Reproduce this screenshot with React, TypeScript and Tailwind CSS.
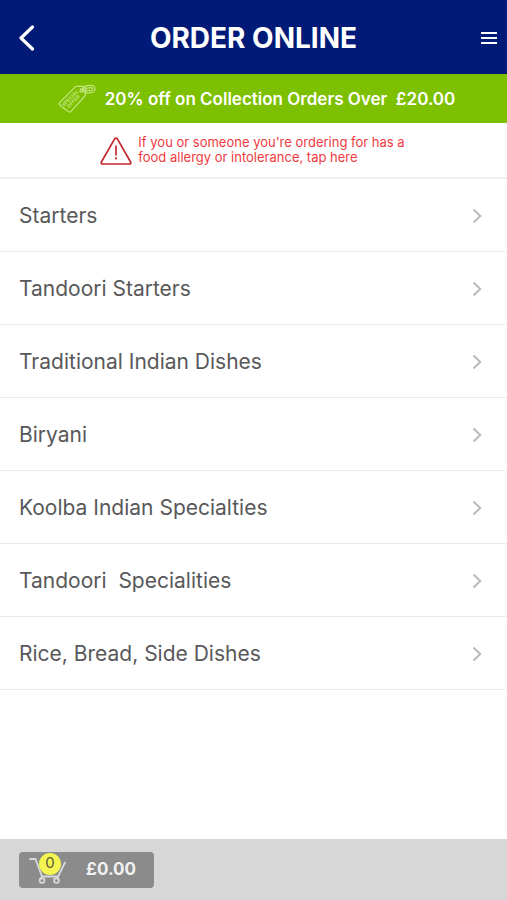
// Takeaway ordering screen: offer banner, allergy notice, menu categories and
// the basket bar pinned to the bottom of the page.

const CATEGORIES = [
  "Starters",
  "Tandoori Starters",
  "Traditional Indian Dishes",
  "Biryani",
  "Koolba Indian Specialties",
  "Tandoori\u00a0 Specialities",
  "Rice, Bread, Side Dishes",
];

function OfferTag() {
  return (
    <svg
      aria-hidden="true"
      viewBox="0 0 38 30"
      className="h-[30px] w-[38px] shrink-0"
      fill="none"
      stroke="#BFE57A"
      strokeWidth="1.3"
      strokeLinejoin="round"
      strokeLinecap="round"
    >
      <path d="M1.6 18.6 16.5 3.6Q18 2.2 20 2.2L25.5 2.4Q27 2.6 27.2 4.2L27.5 9.5Q27.5 11.5 26 13L12.8 27.6Q11.5 28.8 10.2 27.4L1.8 21Q.6 19.8 1.6 18.6Z" />
      <circle cx="23.8" cy="6.4" r="1.8" />
      <path d="M23.8 6.4C25 2.5 29 1.2 33 1.4C38 1.7 38.2 7.4 34 8.4C30 9.4 26.5 9.4 23.8 6.4Z" />
      <path d="M26.6 6C28 4 31 3.6 33 3.7C35.3 3.9 35.2 6 33 6.3C30.5 6.8 28.4 7.1 26.6 6Z" />
      <g fill="#BFE57A" stroke="none" fontFamily="Inter, sans-serif" fontWeight="700" textAnchor="middle">
        <text fontSize="5" transform="translate(13.4 15.3) rotate(-45)">SPECIAL</text>
        <text fontSize="5" transform="translate(16.6 18.6) rotate(-45)">OFFER</text>
      </g>
    </svg>
  );
}

function WarningTriangle() {
  return (
    <svg aria-hidden="true" viewBox="0 0 32 28" className="mt-[2px] h-[28px] w-[32px] shrink-0" fill="none" stroke="#C3272B">
      <path d="M14.8 1.7Q16 .4 17.2 1.7L30.6 25Q31.2 27 29.4 27H2.6Q.8 27 1.4 25Z" strokeWidth="1.7" strokeLinejoin="round" />
      <path d="M16 9V17.8" strokeWidth="1.7" strokeLinecap="round" />
      <circle cx="16" cy="21.4" r="1.1" fill="#C3272B" stroke="none" />
    </svg>
  );
}

function Cart() {
  return (
    <svg
      aria-hidden="true"
      viewBox="0 0 38 28"
      className="h-[28px] w-[38px]"
      fill="none"
      stroke="#D8D8D8"
      strokeWidth="1.8"
      strokeLinecap="round"
      strokeLinejoin="round"
    >
      <path d="M1 3H6.5L13 20.5H29L36 6.5" />
      <path d="M13 20.5 11.8 23M29 20.5 28.5 23" />
      <circle cx="13" cy="24.5" r="2.4" />
      <circle cx="27.5" cy="24.5" r="2.4" />
    </svg>
  );
}

function Header() {
  return (
    <header className="flex h-[74px] items-center justify-between bg-[#001B77] pt-[2px] text-white">
      <button type="button" aria-label="Back" className="flex h-full w-14 items-center pl-[19px]">
        <svg aria-hidden="true" viewBox="0 0 16 26" className="h-[26px] w-4" fill="none" stroke="currentColor" strokeWidth="3.2" strokeLinecap="round" strokeLinejoin="round">
          <path d="M13.5 2 2 13 13.5 24" />
        </svg>
      </button>
      <h1 className="text-[28px] leading-8 font-bold">ORDER ONLINE</h1>
      <button type="button" aria-label="Menu" className="flex h-full w-14 items-center justify-end pr-[10px]">
        <svg aria-hidden="true" viewBox="0 0 16 12" className="h-3 w-4" fill="currentColor">
          <path d="M0 0H16V2H0ZM0 5H16V7H0ZM0 10H16V12H0Z" />
        </svg>
      </button>
    </header>
  );
}

export default function App() {
  return (
    <div className="flex min-h-screen flex-col bg-white font-['Inter',sans-serif]">
      <Header />

      <div className="flex h-[49px] items-center justify-center gap-[9px] bg-[#7DC000] pl-1.5 text-white">
        <OfferTag />
        <p className="text-[17px] leading-5 font-semibold whitespace-nowrap">
          20% off on Collection Orders Over&nbsp; £20.00
        </p>
      </div>

      <a href="#allergy" className="flex h-[56px] items-center justify-center gap-[6px] border-b-2 border-[#F0F0F0] pr-0.5 text-[#F03A40]">
        <WarningTriangle />
        <span className="text-[13px] leading-[15px]">
          If you or someone you're ordering for has a
          <br />
          food allergy or intolerance, tap here
        </span>
      </a>

      <nav aria-label="Menu categories">
        <ul>
          {CATEGORIES.map((name) => (
            <li key={name} className="border-b border-[#EAEAEA]">
              <a href="#category" className="flex h-[72px] items-center justify-between pt-[2px] pr-[25px] pl-[19px] text-[21px] text-[#58585A]">
                {name}
                <svg aria-hidden="true" viewBox="0 0 10 16" className="h-4 w-[10px]" fill="none" stroke="#BDBDBD" strokeWidth="2.2">
                  <path d="M1.5 1.5 8.2 8 1.5 14.5" />
                </svg>
              </a>
            </li>
          ))}
        </ul>
      </nav>

      <footer className="mt-auto flex h-[61px] items-center bg-[#D7D7D7] px-[19px]">
        <button type="button" className="flex h-[36px] w-[135px] items-center justify-between rounded-[4px] bg-[#8B8B8B] pr-[18px] pl-[10px] text-[#F1F1F1]">
          <span className="relative">
            <Cart />
            <span className="absolute -top-[3px] left-[10px] flex h-[22px] w-[22px] items-center justify-center rounded-full bg-[#F4F550] text-[15px] text-[#5C5C3A]">
              0
            </span>
          </span>
          <span className="text-[17px] font-bold">£0.00</span>
        </button>
      </footer>
    </div>
  );
}
